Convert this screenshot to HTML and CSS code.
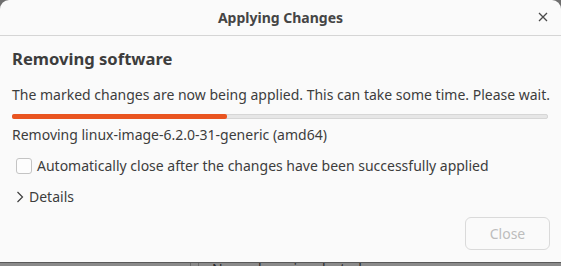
FILE: index.html
```html
<!DOCTYPE html>
<html>
<head>
<meta charset="utf-8">
<link rel="stylesheet" href="styles.css">
</head>
<body>
<div class="dialog">
  <div class="header">
    <div class="title">Applying Changes</div>
    <div class="close-x">
      <svg width="10" height="10" viewBox="0 0 10 10"><path d="M1 1 L9 9 M9 1 L1 9" stroke="#4a4a4a" stroke-width="1.3" fill="none"/></svg>
    </div>
  </div>
  <div class="content">
    <div class="heading">Removing software</div>
    <div class="desc">The marked changes are now being applied. This can take some time. Please wait.</div>
    <div class="progress"><div class="fill" style="width:40.3%"></div></div>
    <div class="status">Removing linux-image-6.2.0-31-generic (amd64)</div>
    <label class="check-row"><span class="checkbox"></span><span>Automatically close after the changes have been successfully applied</span></label>
    <div class="expander">
      <svg width="8" height="12" viewBox="0 0 8 12"><path d="M1.5 1 L6.5 6 L1.5 11" stroke="#3d3d3d" stroke-width="1.2" fill="none"/></svg>
      <span>Details</span>
    </div>
    <div class="actions"><button class="btn" disabled>Close</button></div>
  </div>
</div>
<div class="parent">
  <div class="parent-row"><span class="col"></span><span class="col"></span><span class="ptext">No package is selected</span></div>
</div>
</body>
</html>
```
FILE: styles.css
```css
html, body {
  margin: 0;
  padding: 0;
  width: 561px;
  height: 266px;
  overflow: hidden;
  background: #6f6f6f;
  font-family: "Noto Sans", "Open Sans", sans-serif;
  color: #3d3d3d;
}
.dialog {
  width: 561px;
  height: 262px;
  background: #fafafa;
  border-radius: 9px 9px 0 0;
  display: flex;
  flex-direction: column;
  border-bottom: 1px solid #5a5a5a;
}
.header {
  height: 35px;
  border-bottom: 1px solid #d5d5d5;
  display: flex;
  align-items: center;
  justify-content: center;
  position: relative;
  flex: none;
}
.title {
  font-weight: 700;
  font-size: 14px;
  color: #454545;
}
.close-x {
  position: absolute;
  right: 13px;
  top: 12px;
  width: 10px;
  height: 10px;
  display: flex;
}
.content {
  padding: 0 12px 0 12px;
  display: flex;
  flex-direction: column;
  flex: 1;
}
.heading {
  font-weight: 700;
  font-size: 16.6px;
  margin-top: 11px;
  line-height: 24px;
}
.desc {
  font-size: 14px;
  line-height: 20px;
  margin-top: 14px;
  white-space: nowrap;
}
.progress {
  margin-top: 9px;
  height: 3px;
  background: #e6e6e6;
  border: 1px solid #d6d6d6;
  border-radius: 2px;
  position: relative;
  width: 534px;
}
.fill {
  position: absolute;
  left: -1px;
  top: -1px;
  bottom: -1px;
  background: #e95420;
  border-radius: 2px;
}
.status {
  font-size: 14px;
  line-height: 20px;
  margin-top: 6px;
  white-space: nowrap;
}
.check-row {
  display: flex;
  align-items: center;
  gap: 5px;
  margin-top: 11px;
  margin-left: 4px;
  font-size: 14px;
  line-height: 20px;
  white-space: nowrap;
}
.checkbox {
  width: 14px;
  height: 14px;
  border: 1px solid #c4c4c4;
  border-radius: 3px;
  background: #fdfdfd;
  flex: none;
}
.expander {
  display: flex;
  align-items: center;
  gap: 5px;
  margin-top: 11px;
  margin-left: 4px;
  font-size: 14px;
  line-height: 20px;
}
.actions {
  display: flex;
  justify-content: flex-end;
  margin-top: 10px;
}
.btn {
  width: 85px;
  height: 33px;
  border: 1px solid #dadada;
  border-radius: 6px;
  background: #fafafa;
  color: #bdbdbd;
  font-family: "Noto Sans", "Open Sans", sans-serif;
  font-size: 14px;
  padding: 0;
  margin-right: -1px;
}
.parent {
  height: 3px;
  background: #8a8a8a;
  overflow: hidden;
}
.parent-row {
  display: flex;
  align-items: flex-start;
  height: 3px;
}
.col {
  width: 1px;
  height: 3px;
  background: #6a6a6a;
  margin-left: 190px;
}
.col + .col {
  margin-left: 7px;
}
.ptext {
  font-size: 14px;
  line-height: 14px;
  margin-left: 13px;
  margin-top: -1px;
  color: #2a2a2a;
}
```
